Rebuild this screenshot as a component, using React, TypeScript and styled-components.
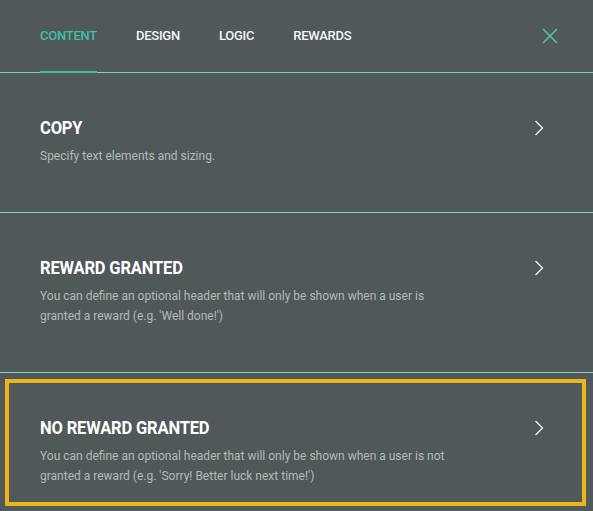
import React from "react";
import styled, { createGlobalStyle } from "styled-components";

const Global = createGlobalStyle`
  html, body { margin: 0; padding: 0; background: #505859; }
  body { font-family: Roboto, "Liberation Sans", sans-serif; overflow: hidden; }
`;

const Panel = styled.div`
  width: 593px;
  height: 511px;
  background: #505859;
  overflow: hidden;
  display: flex;
  flex-direction: column;
`;

const TabBar = styled.div`
  height: 73px;
  box-sizing: border-box;
  border-bottom: 1px solid #7fd3c6;
  display: flex;
  align-items: stretch;
  padding: 0 34px 0 40px;
`;

const Tabs = styled.div`
  display: flex;
  gap: 39px;
  flex: 1;
`;

const Tab = styled.div<{ $active?: boolean }>`
  display: flex;
  align-items: center;
  height: 73px;
  box-sizing: border-box;
  margin-bottom: -1px;
  font-size: 13px;
  font-weight: 500;
  letter-spacing: -0.25px;
  color: ${(p) => (p.$active ? "#3fc0a6" : "#f4f6f6")};
  border-bottom: 2px solid ${(p) => (p.$active ? "#3fc0a6" : "transparent")};
`;

const Close = styled.button`
  align-self: center;
  background: none;
  border: 0;
  padding: 0;
  width: 18px;
  height: 18px;
  display: flex;
  align-items: center;
  justify-content: center;
  cursor: pointer;
`;

const Section = styled.div<{ $highlight?: boolean }>`
  position: relative;
  display: flex;
  align-items: flex-start;
  padding: 44px 46px 46px 40px;
  border-bottom: 1px solid #7fd3c6;
  flex-shrink: 0;
  ${(p) =>
    p.$highlight &&
    `
    &::after {
      content: "";
      position: absolute;
      left: 5px;
      top: 6px;
      width: 581px;
      height: 127px;
      box-sizing: border-box;
      border: 4px solid #ecb51a;
      pointer-events: none;
    }
  `}
`;

const Body = styled.div`
  flex: 1;
  display: flex;
  flex-direction: column;
  gap: 7px;
`;

const Title = styled.div`
  font-size: 19px;
  line-height: 22px;
  font-weight: 700;
  color: #ffffff;
  letter-spacing: -0.2px;
  transform: scaleX(0.87);
  transform-origin: left center;
  white-space: nowrap;
`;

const Desc = styled.div`
  font-size: 12px;
  line-height: 20px;
  color: #b4b9b9;
  max-width: 410px;
`;

const Chevron = styled.div`
  width: 16px;
  height: 22px;
  display: flex;
  align-items: center;
  justify-content: center;
`;

const ChevronIcon = () => (
  <svg width="10" height="16" viewBox="0 0 10 16">
    <path d="M1.5 1 L8.5 8 L1.5 15" fill="none" stroke="#eef1f1" strokeWidth="1.3" />
  </svg>
);

const CloseIcon = () => (
  <svg width="16" height="16" viewBox="0 0 16 16">
    <path d="M1 1 L15 15 M15 1 L1 15" fill="none" stroke="#4cc6ad" strokeWidth="1.5" />
  </svg>
);

const sections = [
  { title: "COPY", desc: "Specify text elements and sizing." },
  {
    title: "REWARD GRANTED",
    desc: "You can define an optional header that will only be shown when a user is granted a reward (e.g. 'Well done!')",
  },
  {
    title: "NO REWARD GRANTED",
    desc: "You can define an optional header that will only be shown when a user is not granted a reward (e.g. 'Sorry! Better luck next time!')",
    highlight: true,
  },
];

export default function App() {
  return (
    <Panel>
      <Global />
      <TabBar>
        <Tabs>
          <Tab $active>CONTENT</Tab>
          <Tab>DESIGN</Tab>
          <Tab>LOGIC</Tab>
          <Tab>REWARDS</Tab>
        </Tabs>
        <Close aria-label="Close">
          <CloseIcon />
        </Close>
      </TabBar>
      {sections.map((s) => (
        <Section key={s.title} $highlight={s.highlight}>
          <Body>
            <Title>{s.title}</Title>
            <Desc>{s.desc}</Desc>
          </Body>
          <Chevron>
            <ChevronIcon />
          </Chevron>
        </Section>
      ))}
    </Panel>
  );
}
